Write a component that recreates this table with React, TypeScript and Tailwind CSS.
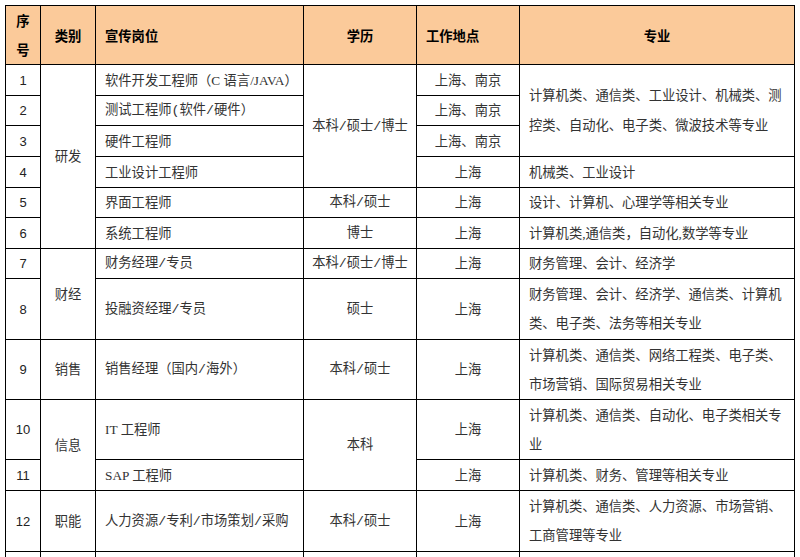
import React from "react";

const td = "border border-black align-middle leading-[29px] p-0";
const c = `${td} text-center`;
const e = `${td} text-center font-['Liberation_Mono','Noto_Sans_CJK_SC',monospace]`;
const l = `${td} text-left pl-[9px] pr-[4px]`;
const lm = `${l} font-['Liberation_Mono','Noto_Sans_CJK_SC',monospace]`;
const n = `${td} text-center font-['Liberation_Sans',sans-serif] text-[13px] text-[#222]`;
const th = "border border-black align-middle leading-[29px] p-0 font-bold text-black font-['Noto_Sans_CJK_SC',sans-serif]";

export default function App() {
  return (
    <div className="w-[800px] h-[557px] overflow-hidden bg-white pl-[5px] pt-[5px]">
      <table className="table-fixed border-collapse w-[789px] text-[13.3px] text-[#333] font-['Liberation_Serif','Noto_Sans_CJK_SC',serif]">
        <colgroup>
          <col className="w-[35px]" />
          <col className="w-[55px]" />
          <col className="w-[208px]" />
          <col className="w-[113px]" />
          <col className="w-[103px]" />
          <col className="w-[275px]" />
        </colgroup>
        <thead>
          <tr className="h-[59px] bg-[#FBCA9A]">
            <th className={`${th} text-center`}>序<br />号</th>
            <th className={`${th} text-center`}>类别</th>
            <th className={`${th} text-left pl-[9px]`}>宣传岗位</th>
            <th className={`${th} text-center`}>学历</th>
            <th className={`${th} text-left pl-[9px]`}>工作地点</th>
            <th className={`${th} text-center`}>专业</th>
          </tr>
        </thead>
        <tbody>
          <tr className="h-[31px]">
            <td className={n}>1</td>
            <td className={c} rowSpan={6}>研发</td>
            <td className={`${l} whitespace-nowrap`}>软件开发工程师（C 语言/JAVA）</td>
            <td className={e} rowSpan={4}>本科/硕士/博士</td>
            <td className={c}>上海、南京</td>
            <td className={`${l} leading-[30px]`} rowSpan={3}>计算机类、通信类、工业设计、机械类、测控类、自动化、电子类、微波技术等专业</td>
          </tr>
          <tr className="h-[30px]">
            <td className={n}>2</td>
            <td className={lm}>测试工程师(软件/硬件）</td>
            <td className={c}>上海、南京</td>
          </tr>
          <tr className="h-[31px]">
            <td className={n}>3</td>
            <td className={l}>硬件工程师</td>
            <td className={c}>上海、南京</td>
          </tr>
          <tr className="h-[31px]">
            <td className={n}>4</td>
            <td className={l}>工业设计工程师</td>
            <td className={c}>上海</td>
            <td className={l}>机械类、工业设计</td>
          </tr>
          <tr className="h-[30px]">
            <td className={n}>5</td>
            <td className={l}>界面工程师</td>
            <td className={e}>本科/硕士</td>
            <td className={c}>上海</td>
            <td className={l}>设计、计算机、心理学等相关专业</td>
          </tr>
          <tr className="h-[31px]">
            <td className={n}>6</td>
            <td className={l}>系统工程师</td>
            <td className={e}>博士</td>
            <td className={c}>上海</td>
            <td className={l}>计算机类,通信类，自动化,数学等专业</td>
          </tr>
          <tr className="h-[30px]">
            <td className={n}>7</td>
            <td className={c} rowSpan={2}>财经</td>
            <td className={lm}>财务经理/专员</td>
            <td className={e}>本科/硕士/博士</td>
            <td className={c}>上海</td>
            <td className={l}>财务管理、会计、经济学</td>
          </tr>
          <tr className="h-[61px]">
            <td className={n}>8</td>
            <td className={lm}>投融资经理/专员</td>
            <td className={e}>硕士</td>
            <td className={c}>上海</td>
            <td className={l}>财务管理、会计、经济学、通信类、计算机类、电子类、法务等相关专业</td>
          </tr>
          <tr className="h-[60px]">
            <td className={n}>9</td>
            <td className={c}>销售</td>
            <td className={lm}>销售经理（国内/海外）</td>
            <td className={e}>本科/硕士</td>
            <td className={c}>上海</td>
            <td className={l}>计算机类、通信类、网络工程类、电子类、市场营销、国际贸易相关专业</td>
          </tr>
          <tr className="h-[60px]">
            <td className={n}>10</td>
            <td className={c} rowSpan={2}>信息</td>
            <td className={l}>IT 工程师</td>
            <td className={e} rowSpan={2}>本科</td>
            <td className={c}>上海</td>
            <td className={l}>计算机类、通信类、自动化、电子类相关专业</td>
          </tr>
          <tr className="h-[31px]">
            <td className={n}>11</td>
            <td className={l}>SAP 工程师</td>
            <td className={c}>上海</td>
            <td className={l}>计算机类、财务、管理等相关专业</td>
          </tr>
          <tr className="h-[61px]">
            <td className={n}>12</td>
            <td className={c}>职能</td>
            <td className={`${lm} whitespace-nowrap`}>人力资源/专利/市场策划/采购</td>
            <td className={e}>本科/硕士</td>
            <td className={c}>上海</td>
            <td className={l}>计算机类、通信类、人力资源、市场营销、工商管理等专业</td>
          </tr>
          <tr className="h-[30px]">
            <td className={c}></td>
            <td className={c}></td>
            <td className={l}></td>
            <td className={c}></td>
            <td className={c}></td>
            <td className={l}></td>
          </tr>
        </tbody>
      </table>
    </div>
  );
}
